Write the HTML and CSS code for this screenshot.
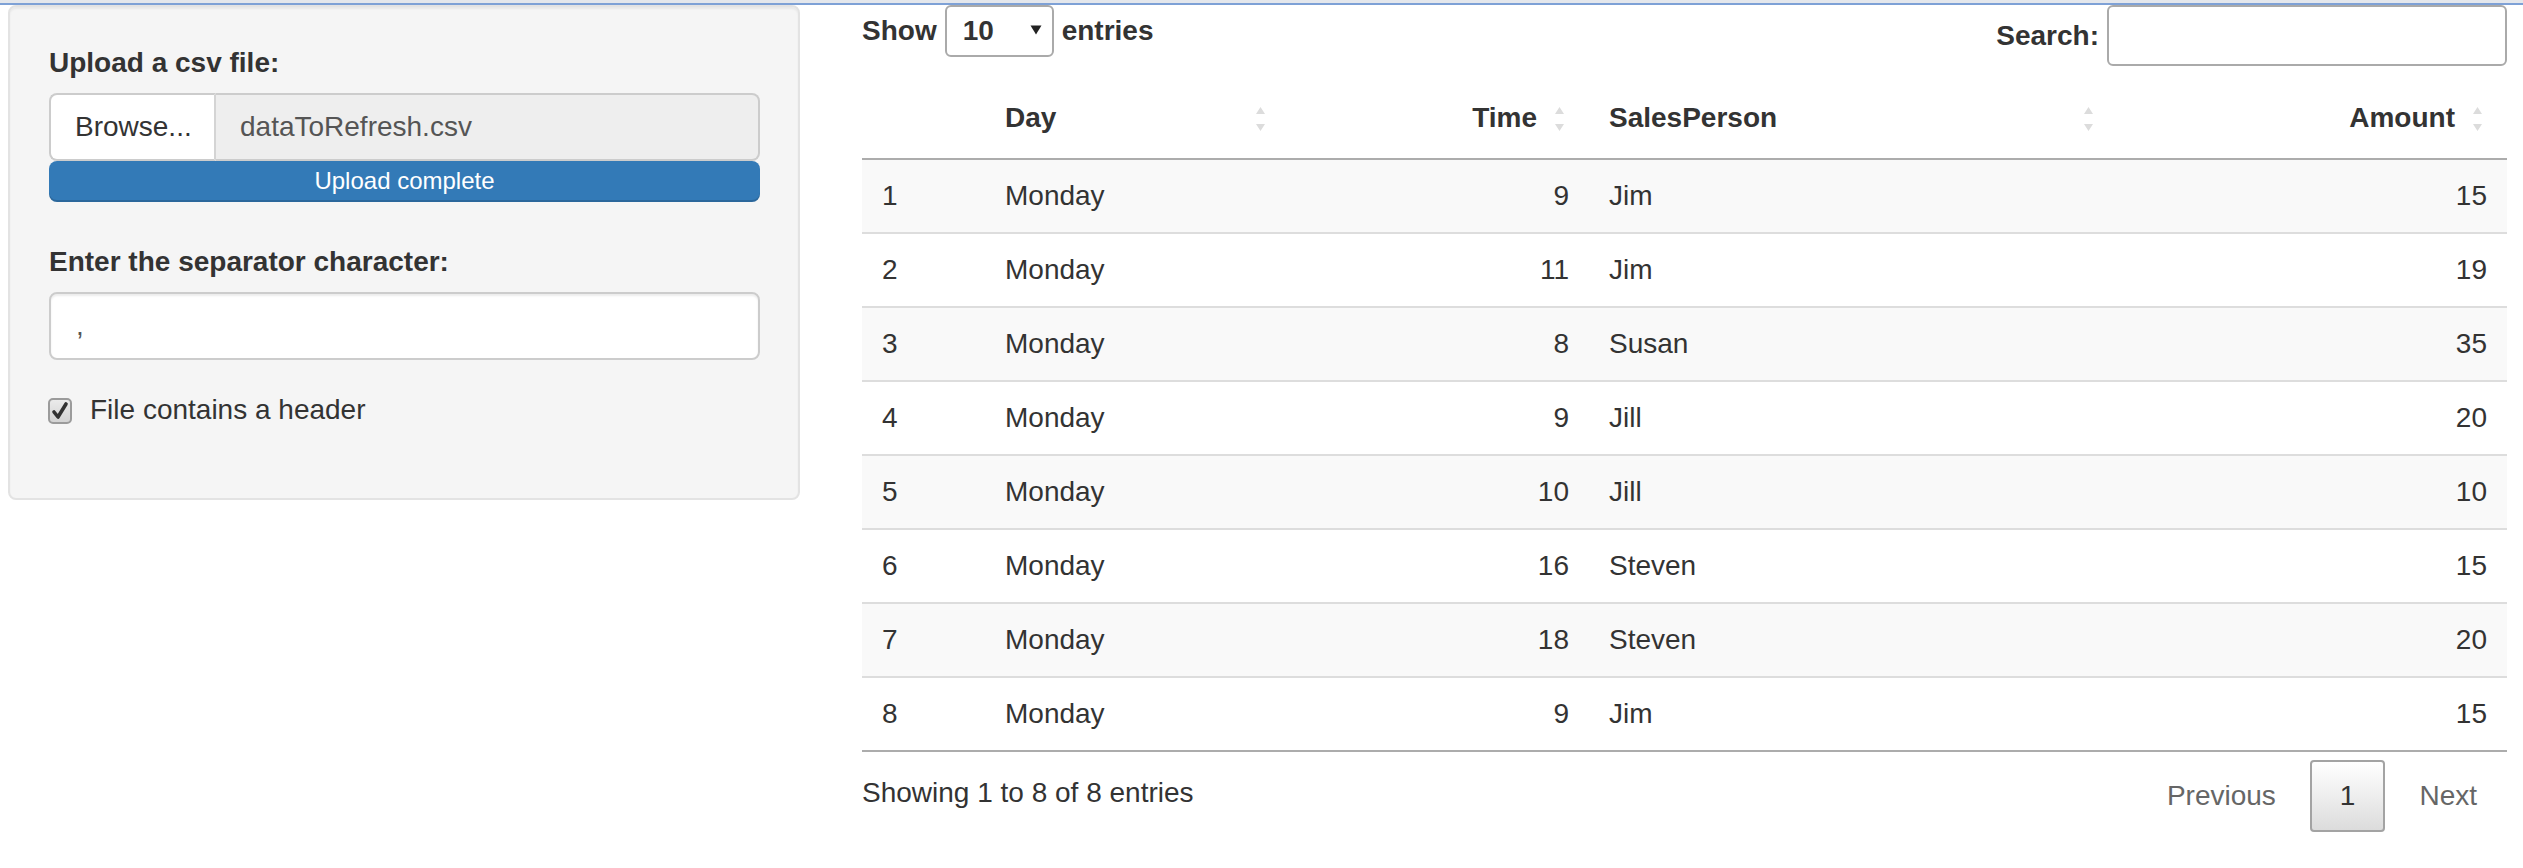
FILE: index.html
```html
<!DOCTYPE html>
<html lang="en">
<head>
<meta charset="utf-8">
<title>CSV upload</title>
<link rel="stylesheet" href="styles.css">
</head>
<body>
<div class="topbar"></div>
<div class="page">
  <aside class="well">
    <label class="ctl-label">Upload a csv file:</label>
    <div class="file-group">
      <span class="browse">Browse...</span>
      <span class="file-name">dataToRefresh.csv</span>
    </div>
    <div class="progress">Upload complete</div>
    <label class="ctl-label sep-label">Enter the separator character:</label>
    <div class="text-input">,</div>
    <div class="check-row">
      <svg class="cbox" width="24" height="26" viewBox="0 0 24 26" aria-hidden="true">
        <defs>
          <linearGradient id="cbg" x1="0" y1="0" x2="0" y2="1">
            <stop offset="0" stop-color="#ececec"/>
            <stop offset="1" stop-color="#d2d2d2"/>
          </linearGradient>
        </defs>
        <rect x="1" y="1" width="22" height="24" rx="4" ry="4" fill="url(#cbg)" stroke="#9b9b9b" stroke-width="2"/>
        <path d="M6 14 L10 19 L18 6" fill="none" stroke="#333" stroke-width="3.6" stroke-linecap="round" stroke-linejoin="round"/>
      </svg>
      <span>File contains a header</span>
    </div>
  </aside>

  <main class="main">
    <div class="dt-top">
      <div class="dt-length">
        <span class="bold">Show</span>
        <div class="select">
          <span>10</span>
          <svg width="12" height="10" viewBox="0 0 12 10" aria-hidden="true"><path d="M0.5 0.5 H11.5 L6 9.5 Z" fill="#222"/></svg>
        </div>
        <span class="bold">entries</span>
      </div>
      <div class="dt-filter">
        <span class="bold">Search:</span>
        <div class="search-box"></div>
      </div>
    </div>

    <table class="dt">
      <colgroup>
        <col class="c0"><col class="c1"><col class="c2"><col class="c3"><col class="c4">
      </colgroup>
      <thead>
        <tr>
          <th></th>
          <th class="sortable">Day<svg class="sort" width="9" height="24" viewBox="0 0 9 24" aria-hidden="true"><path d="M4.5 0 L9 7 H0 Z M0 17 H9 L4.5 24 Z" fill="#dcdcdc"/></svg></th>
          <th class="sortable num">Time<svg class="sort" width="9" height="24" viewBox="0 0 9 24" aria-hidden="true"><path d="M4.5 0 L9 7 H0 Z M0 17 H9 L4.5 24 Z" fill="#dcdcdc"/></svg></th>
          <th class="sortable">SalesPerson<svg class="sort" width="9" height="24" viewBox="0 0 9 24" aria-hidden="true"><path d="M4.5 0 L9 7 H0 Z M0 17 H9 L4.5 24 Z" fill="#dcdcdc"/></svg></th>
          <th class="sortable num">Amount<svg class="sort" width="9" height="24" viewBox="0 0 9 24" aria-hidden="true"><path d="M4.5 0 L9 7 H0 Z M0 17 H9 L4.5 24 Z" fill="#dcdcdc"/></svg></th>
        </tr>
      </thead>
      <tbody>
        <tr><td>1</td><td>Monday</td><td class="num">9</td><td>Jim</td><td class="num">15</td></tr>
        <tr><td>2</td><td>Monday</td><td class="num">11</td><td>Jim</td><td class="num">19</td></tr>
        <tr><td>3</td><td>Monday</td><td class="num">8</td><td>Susan</td><td class="num">35</td></tr>
        <tr><td>4</td><td>Monday</td><td class="num">9</td><td>Jill</td><td class="num">20</td></tr>
        <tr><td>5</td><td>Monday</td><td class="num">10</td><td>Jill</td><td class="num">10</td></tr>
        <tr><td>6</td><td>Monday</td><td class="num">16</td><td>Steven</td><td class="num">15</td></tr>
        <tr><td>7</td><td>Monday</td><td class="num">18</td><td>Steven</td><td class="num">20</td></tr>
        <tr><td>8</td><td>Monday</td><td class="num">9</td><td>Jim</td><td class="num">15</td></tr>
      </tbody>
    </table>

    <div class="dt-bottom">
      <div class="dt-info">Showing 1 to 8 of 8 entries</div>
      <div class="pager">
        <span class="pbtn disabled">Previous</span>
        <span class="pbtn current">1</span>
        <span class="pbtn disabled">Next</span>
      </div>
    </div>
  </main>
</div>
</body>
</html>
```

FILE: styles.css
```css
* { box-sizing: border-box; }

html, body {
  margin: 0;
  padding: 0;
  background: #ffffff;
}

body {
  font-family: "Liberation Sans", Arial, Helvetica, sans-serif;
  font-size: 28px;
  line-height: 40px;
  color: #333333;
}

.topbar {
  height: 5px;
  background: linear-gradient(to bottom, #e4e7ec 0, #e4e7ec 3px, #7ea1d6 3px, #7ea1d6 5px);
}

.page {
  display: flex;
  align-items: flex-start;
  padding: 0 16px 0 8px;
}

/* ---------- sidebar ---------- */
.well {
  width: 792px;
  flex: none;
  background: #f5f5f5;
  border: 2px solid #e3e3e3;
  border-radius: 8px;
  box-shadow: inset 0 2px 2px rgba(0, 0, 0, 0.05);
  padding: 36px 38px 38px 39px;
  display: flex;
  flex-direction: column;
}

.ctl-label {
  display: block;
  font-weight: bold;
  margin-bottom: 10px;
}

.sep-label {
  margin-top: 40px;
}

.file-group {
  display: flex;
  height: 68px;
}

.browse {
  width: 167px;
  flex: none;
  background: #ffffff;
  border: 2px solid #cccccc;
  border-right: 2px solid #d4d4d4;
  border-radius: 8px 0 0 8px;
  padding: 12px 24px;
  color: #333333;
}

.file-name {
  flex: 1;
  background: #eeeeee;
  border: 2px solid #cccccc;
  border-left: 0;
  border-radius: 0 8px 8px 0;
  padding: 12px 24px;
  color: #555555;
}

.progress {
  height: 41px;
  background: #337ab7;
  border-radius: 8px;
  box-shadow: inset 0 -2px 0 rgba(0, 0, 0, 0.15);
  color: #ffffff;
  font-size: 24px;
  line-height: 40px;
  text-align: center;
}

.text-input {
  height: 68px;
  background: #ffffff;
  border: 2px solid #cccccc;
  border-radius: 8px;
  padding: 12px 24px 12px 25px;
  color: #555555;
  box-shadow: inset 0 2px 2px rgba(0, 0, 0, 0.075);
}

.check-row {
  display: flex;
  align-items: flex-start;
  margin-top: 30px;
  margin-bottom: 30px;
}

.cbox {
  flex: none;
  margin-top: 8px;
  margin-left: -1px;
  margin-right: 18px;
}

/* ---------- main ---------- */
.main {
  flex: 1;
  margin-left: 62px;
  min-width: 0;
}

.bold { font-weight: bold; }

.dt-top {
  display: flex;
  justify-content: space-between;
  align-items: flex-start;
}

.dt-length {
  display: flex;
  align-items: center;
  height: 52px;
  gap: 8px;
}

.select {
  width: 109px;
  height: 52px;
  border: 2px solid #aaaaaa;
  border-radius: 6px;
  background: #ffffff;
  display: flex;
  align-items: center;
  justify-content: space-between;
  padding: 0 10px 0 16px;
  font-weight: bold;
  color: #333333;
}

.select svg { display: block; margin-top: -2px; }

.dt-filter {
  display: flex;
  align-items: center;
  height: 61px;
  gap: 8px;
}

.search-box {
  width: 400px;
  height: 61px;
  border: 2px solid #aaaaaa;
  border-radius: 6px;
  background: #ffffff;
}

.dt {
  width: 100%;
  table-layout: fixed;
  border-collapse: separate;
  border-spacing: 0;
  margin-top: 20px;
}

col.c0 { width: 123px; }
col.c1 { width: 305px; }
col.c2 { width: 299px; }
col.c3 { width: 529px; }
col.c4 { width: 389px; }

.dt th {
  position: relative;
  text-align: left;
  font-weight: bold;
  padding: 12px 20px 20px 20px;
  border-bottom: 2px solid #acacac;
  white-space: nowrap;
}

.dt th.num {
  text-align: right;
  padding-right: 52px;
}

.dt th .sort {
  position: absolute;
  right: 25px;
  top: 21px;
}

.dt td {
  padding: 16px 20px;
  border-top: 2px solid #dddddd;
  white-space: nowrap;
}

.dt tbody tr:first-child td { border-top: 0; }
.dt tbody tr:last-child td { border-bottom: 2px solid #acacac; }
.dt tbody tr:nth-child(odd) td { background: #f9f9f9; }

.dt td.num { text-align: right; }

.dt-bottom {
  display: flex;
  justify-content: space-between;
  align-items: flex-start;
  margin-top: 8px;
}

.dt-info {
  padding-top: 13px;
}

.pager {
  display: flex;
  gap: 4px;
}

.pbtn {
  display: block;
  padding: 14px 28px;
  border: 2px solid transparent;
  border-radius: 4px;
  color: #666666;
}

.pbtn.current {
  color: #333333;
  border-color: #a3a3a3;
  background: linear-gradient(to bottom, #ffffff 0%, #dcdcdc 100%);
  padding: 14px 28px;
}
```
